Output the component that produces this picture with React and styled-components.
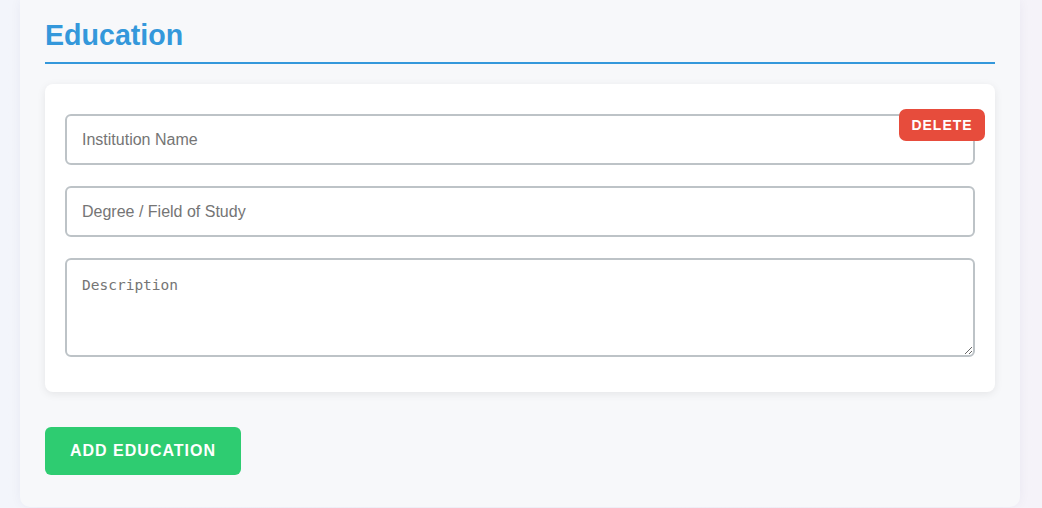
import React from 'react';
import styled, { createGlobalStyle } from 'styled-components';

const GlobalStyle = createGlobalStyle`
  html, body {
    margin: 0;
    padding: 0;
    height: 100%;
    overflow: hidden;
  }
  body {
    background: linear-gradient(90deg, #f3f5fb 0%, #f5f3f9 100%);
    font-family: "Liberation Sans", Arial, sans-serif;
  }
`;

const Page = styled.div`
  padding: 0 22px 0 20px;
`;

const Section = styled.section`
  background: #f7f8fa;
  border-radius: 0 0 10px 10px;
  box-shadow: 0 0 12px rgba(40, 40, 90, 0.05);
  padding: 19px 25px 32px;
`;

const Heading = styled.h2`
  margin: 0 0 20px;
  padding-bottom: 10px;
  color: #3498db;
  font-size: 28.6px;
  font-weight: 700;
  border-bottom: 2px solid #3498db;
`;

const Card = styled.div`
  position: relative;
  background: #fff;
  border-radius: 8px;
  box-shadow: 0 2px 8px rgba(0, 0, 0, 0.08);
  padding: 30px 20px 35px;
  display: flex;
  flex-direction: column;
  gap: 21px;
`;

const Field = styled.input`
  box-sizing: border-box;
  width: 100%;
  height: 51px;
  padding: 0 15px;
  border: 2px solid #bdc3c7;
  border-radius: 6px;
  font-family: "Liberation Sans", Arial, sans-serif;
  font-size: 16px;
  color: #333;
  outline: none;

  &::placeholder {
    color: #757575;
  }
`;

const Area = styled.textarea`
  box-sizing: border-box;
  display: block;
  width: 100%;
  height: 99px;
  padding: 17px 15px 15px;
  border: 2px solid #bdc3c7;
  border-radius: 6px;
  font-family: "DejaVu Sans Mono", monospace;
  font-size: 14.5px;
  outline: none;

  &::placeholder {
    color: #757575;
  }
`;

const DeleteButton = styled.button`
  position: absolute;
  top: 25px;
  right: 10px;
  width: 86px;
  height: 32px;
  border: none;
  border-radius: 7px;
  background: #e74c3c;
  color: #fff;
  font-family: "Liberation Sans", Arial, sans-serif;
  font-size: 14px;
  font-weight: 700;
  letter-spacing: 1px;
  cursor: pointer;
`;

const AddButton = styled.button`
  margin-top: 35px;
  width: 196px;
  height: 48px;
  border: none;
  border-radius: 6px;
  background: #2ecc71;
  color: #fff;
  font-family: "Liberation Sans", Arial, sans-serif;
  font-size: 16px;
  font-weight: 700;
  letter-spacing: 1px;
  cursor: pointer;
`;

export default function App() {
  return (
    <>
      <GlobalStyle />
      <Page>
        <Section>
          <Heading>Education</Heading>
          <Card>
            <Field placeholder="Institution Name" />
            <Field placeholder="Degree / Field of Study" />
            <Area placeholder="Description" />
            <DeleteButton>DELETE</DeleteButton>
          </Card>
          <AddButton>ADD EDUCATION</AddButton>
        </Section>
      </Page>
    </>
  );
}
